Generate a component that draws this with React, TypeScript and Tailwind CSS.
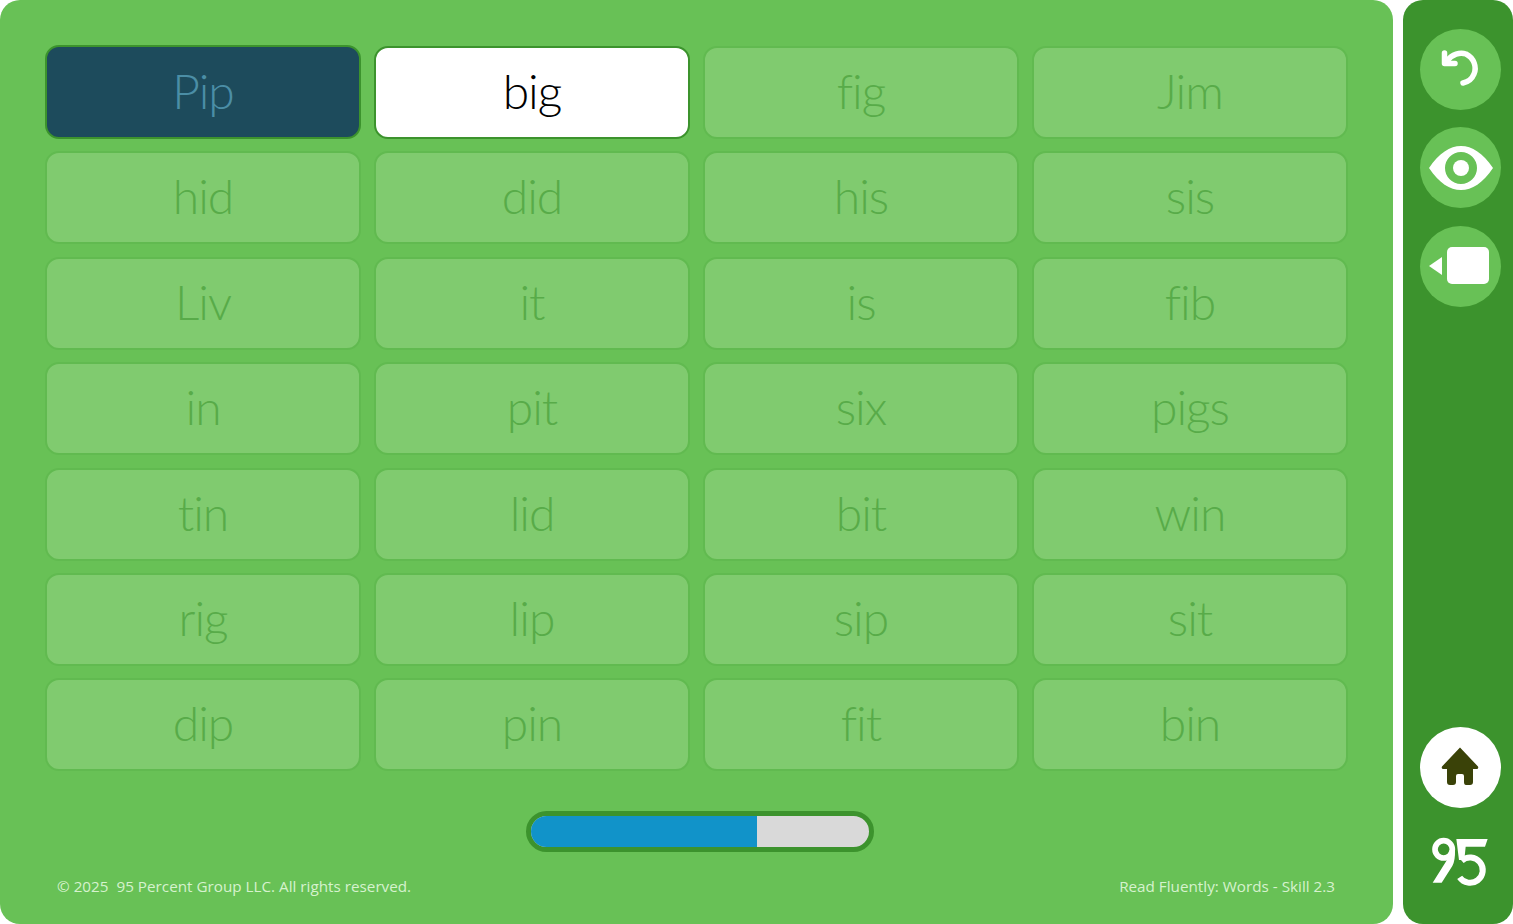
import React from "react";

const rows = [
    ["Pip", "big", "fig", "Jim"],
    ["hid", "did", "his", "sis"],
    ["Liv", "it", "is", "fib"],
    ["in", "pit", "six", "pigs"],
    ["tin", "lid", "bit", "win"],
    ["rig", "lip", "sip", "sit"],
    ["dip", "pin", "fit", "bin"],
];

function WordCell({ word }: { word: string }) {
    let look = "bg-[#80cb6f] border-[#61ba50] text-[#58ab49] h-[93px]";
    if (word === "Pip") look = "bg-[#1d4b5c] border-[#3c932d] text-[#4b8ea6] h-[94px] -mt-[1px]";
    if (word === "big") look = "bg-white border-[#3c932d] text-black h-[93px]";

    return (
        <div className={`flex items-center justify-center rounded-[14px] border-2 pb-[3px] font-['Lato',sans-serif] text-[48px] leading-none font-light tracking-[-1px] [font-variant-ligatures:none] ${look}`}>
            {word}
        </div>
    );
}

function RoundButton({ children, white }: { children: React.ReactNode; white?: boolean }) {
    return (
        <div className={`flex h-[81px] w-[81px] items-center justify-center rounded-full ${white ? "bg-white" : "bg-[#68c156]"}`}>
            {children}
        </div>
    );
}

export default function App() {
    return (
        <div className="flex h-[924px] w-[1513px] gap-[10px] overflow-hidden bg-white">
            <div className="flex w-[1393px] flex-col rounded-[20px] bg-[#68c156] pt-[46px] pl-[45px]">
                <div className="grid w-[1303px] grid-cols-4 gap-x-[13px] gap-y-[12.4px]">
                    {rows.flat().map((word) => (
                        <WordCell key={word} word={word} />
                    ))}
                </div>

                <div className="mt-[40px] ml-[481px] flex h-[41px] w-[348px] overflow-hidden rounded-full border-[5px] border-[#3c932d] bg-[#d9d9d9]">
                    <div className="h-full w-[226px] bg-[#1193c9]" />
                </div>

                <div className="mt-[24px] flex w-[1290px] justify-between pl-[12px] font-['Open_Sans',sans-serif] text-[15.25px] leading-[20px] text-[#d6f2ce]">
                    <span className="whitespace-pre">© 2025  95 Percent Group LLC. All rights reserved.</span>
                    <span>Read Fluently: Words - Skill 2.3</span>
                </div>
            </div>

            <div className="flex w-[110px] flex-col items-center rounded-[20px] bg-[#3c932d] pt-[29px] pb-[34px] pl-[5px]">
                <div className="flex flex-col gap-[17.4px]">
                    <RoundButton>
                        <svg width="81" height="81" viewBox="0 0 81 81" fill="none">
                            <path d="M24.5 24 V34.5 H35" stroke="white" strokeWidth="5.5" strokeLinecap="round" strokeLinejoin="round" />
                            <path d="M27 32 C32 25 40 23 46 25 C54 29 57 38 54 45 C52 50 48 53 43 54" stroke="white" strokeWidth="5.5" strokeLinecap="round" />
                        </svg>
                    </RoundButton>
                    <RoundButton>
                        <svg width="66" height="46" viewBox="0 0 66 46">
                            <path fillRule="evenodd" fill="white" d="M1 23 C11 8 22 1 33 1 C44 1 55 8 65 23 C55 38 44 45 33 45 C22 45 11 38 1 23 Z M33 7 A16 16 0 1 0 33 39 A16 16 0 1 0 33 7 Z" />
                            <circle cx="33" cy="23" r="8" fill="white" />
                        </svg>
                    </RoundButton>
                    <RoundButton>
                        <svg width="81" height="81" viewBox="0 0 81 81">
                            <path fill="white" d="M9 40 L22 31 L22 49 Z" />
                            <rect x="27" y="21" width="42" height="37" rx="5" fill="white" />
                        </svg>
                    </RoundButton>
                </div>

                <div className="mt-auto flex flex-col items-center gap-[22px]">
                    <RoundButton white>
                        <svg width="81" height="81" viewBox="0 0 81 81">
                            <path fill="#3a4208" d="M40 20.5 L58 39.5 Q59 42 56.5 42 L53 42 L53 55 Q53 58 50 58 L46 58 Q44 58 44 55 L44 49 Q44 47 42 47 L38 47 Q36 47 36 49 L36 55 Q36 58 33 58 L30 58 Q27 58 27 55 L27 42 L23.5 42 Q21 42 22 39.5 Z" />
                        </svg>
                    </RoundButton>
                    <svg width="80" height="60" viewBox="0 0 240 180" fill="none">
                        <circle cx="68" cy="58" r="26" stroke="white" strokeWidth="17" />
                        <path d="M84 80 L35 158 L62 158 L94 108 Q103 92 102 60 L86 60 Z" fill="white" />
                        <path d="M106 27 L200 27 L192 50 L134 50 L130 90 L114 90 Z" fill="white" />
                        <path d="M122 92 A38 38 0 1 1 116 142" stroke="white" strokeWidth="18" />
                    </svg>
                </div>
            </div>
        </div>
    );
}
